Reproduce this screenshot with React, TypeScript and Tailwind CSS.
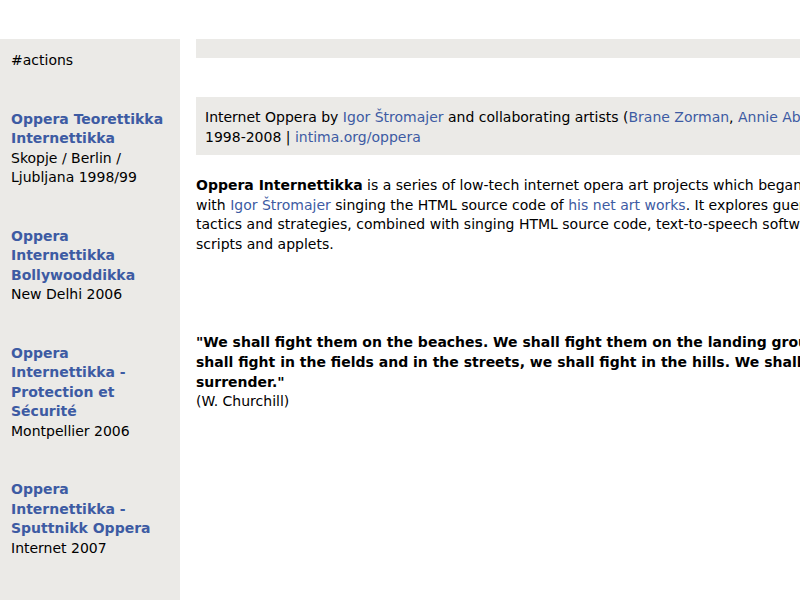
const projects = [
  { title: ["Oppera Teorettikka", "Internettikka"], place: ["Skopje / Berlin /", "Ljubljana 1998/99"] },
  { title: ["Oppera", "Internettikka", "Bollywooddikka"], place: ["New Delhi 2006"] },
  { title: ["Oppera", "Internettikka -", "Protection et", "Sécurité"], place: ["Montpellier 2006"] },
  { title: ["Oppera", "Internettikka -", "Sputtnikk Oppera"], place: ["Internet 2007"] },
];

function A({ children }: { children: React.ReactNode }) {
  return <a href="#" className="text-[#3d5ba3] no-underline">{children}</a>;
}

export default function App() {
  return (
    <div className="w-[800px] h-[600px] overflow-hidden bg-white text-black font-['DejaVu_Sans',sans-serif] text-[14px] leading-[19.5px]">
      <div className="flex pt-[39px] w-[1100px] h-[600px]">
        <aside className="w-[180px] shrink-0 bg-[#ebeae7] pl-[11px] pr-[4px] pt-[12px]">
          <div>#actions</div>
          {projects.map((p, i) => (
            <div key={i} className="mt-[39px]">
              <div className="font-bold">
                {p.title.map((t) => (
                  <div key={t}><A>{t}</A></div>
                ))}
              </div>
              {p.place.map((t) => (
                <div key={t}>{t}</div>
              ))}
            </div>
          ))}
        </aside>

        <main className="flex-1 pl-4">
          <div className="h-[19px] bg-[#ebeae7]" />

          <div className="mt-[39px] bg-[#ebeae7] px-[9px] pt-[11px] pb-[8px] whitespace-nowrap">
            Internet Oppera by <A>Igor Štromajer</A> and collaborating artists (<A>Brane Zorman</A>, <A>Annie Abrahams</A>, ...)
            <br />
            1998-2008 | <A>intima.org/oppera</A>
          </div>

          <p className="mt-[21px] whitespace-nowrap">
            <b>Oppera Internettikka</b> is a series of low-tech internet opera art projects which began in 1998
            <br />
            with <A>Igor Štromajer</A> singing the HTML source code of <A>his net art works</A>. It explores guerrilla
            <br />
            tactics and strategies, combined with singing HTML source code, text-to-speech software, MIDI,
            <br />
            scripts and applets.
          </p>

          <div className="mt-[78px] whitespace-nowrap">
            <div className="font-bold leading-[20px]">
              "We shall fight them on the beaches. We shall fight them on the landing grounds, we
              <br />
              shall fight in the fields and in the streets, we shall fight in the hills. We shall never
              <br />
              surrender."
            </div>
            <div>(W. Churchill)</div>
          </div>
        </main>
      </div>
    </div>
  );
}
